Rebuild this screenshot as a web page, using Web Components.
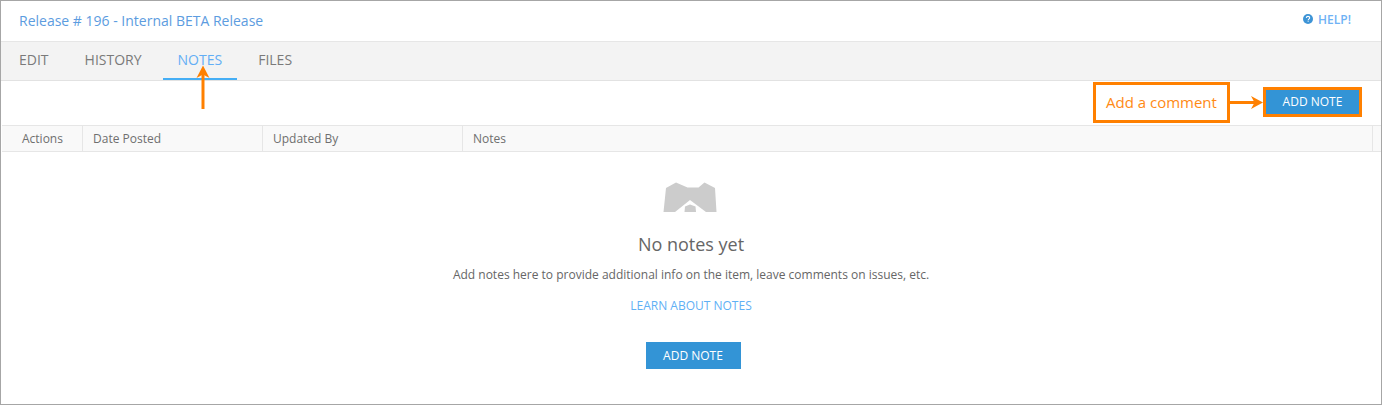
<!DOCTYPE html>
<html>
<head>
<meta charset="utf-8">
<title>Release notes</title>
<style>
  html, body { margin: 0; padding: 0; background: #fff; }
  body { font-family: "Open Sans", sans-serif; }
</style>
</head>
<body>
<release-panel>
  <span slot="title">Release # 196 - Internal BETA Release</span>
  <tab-bar slot="tabs" active="NOTES" tabs="EDIT,HISTORY,NOTES,FILES"></tab-bar>
  <notes-grid slot="grid" columns="Actions:81,Date Posted:180,Updated By:200,Notes:910"></notes-grid>
  <empty-state slot="body"></empty-state>
</release-panel>

<script>
const panelTemplate = document.createElement('template');
panelTemplate.innerHTML = /* html */`
  <style>
  :host {
    display: block;
    position: relative;
    box-sizing: border-box;
    width: 1382px;
    height: 405px;
    border: 1px solid #a6a6a6;
    overflow: hidden;
  }
  .head {
    display: flex;
    justify-content: space-between;
    align-items: center;
    height: 41px;
    box-sizing: border-box;
    padding: 0 30px 2px 18px;
    border-bottom: 1px solid #e6e6e6;
    color: #5c9ce0;
    font-size: 14px;
  }
  .help {
    display: flex;
    align-items: center;
    gap: 5px;
    margin-top: -2px;
    font-size: 12px;
    font-weight: 600;
    color: #6fb2f5;
  }
  .toolbar {
    display: flex;
    justify-content: flex-end;
    align-items: flex-start;
    height: 44px;
    box-sizing: border-box;
    padding: 7px 21px 0 0;
  }
  .box {
    position: absolute;
    left: 1092px;
    top: 81px;
    width: 137px;
    height: 41px;
    box-sizing: border-box;
    border: 3px solid #ff8000;
    color: #ff8a14;
    font-size: 15px;
    line-height: 35px;
    padding-left: 10px;
  }
  .ring {
    position: absolute;
    left: 1262px;
    top: 86px;
    width: 99px;
    height: 30px;
    box-sizing: border-box;
    border: 3px solid #ff8000;
  }
  svg.arrow { position: absolute; left: 0; top: 0; pointer-events: none; }
  </style>
  <div class="head">
    <slot name="title"></slot>
    <div class="help">
      <svg width="10" height="10" viewBox="0 0 10 10">
        <circle cx="5" cy="5" r="5" fill="#3d94d6"/>
        <path d="M3.3 3.9C3.4 2.9 4.1 2.4 5 2.4c1 0 1.7.6 1.7 1.4 0 .7-.4 1-.9 1.3-.4.3-.5.5-.5.9" fill="none" stroke="#fff" stroke-width="1.1"/>
        <rect x="4.6" y="6.6" width="1.1" height="1.1" fill="#fff"/>
      </svg>
      <span>HELP!</span>
    </div>
  </div>
  <slot name="tabs"></slot>
  <div class="toolbar"><action-button>ADD NOTE</action-button></div>
  <slot name="grid"></slot>
  <slot name="body"></slot>
  <div class="box">Add a comment</div>
  <div class="ring"></div>
  <svg class="arrow" width="1380" height="403">
    <path d="M1228 101.500H1254" stroke="#ff8000" stroke-width="3" fill="none"/>
    <path d="M1262 101.500L1250 95L1253.500 101.500L1250 108Z" fill="#ff8000"/>
    <path d="M202 108V72" stroke="#ff8000" stroke-width="3" fill="none"/>
    <path d="M202 64.500L195.500 77L202 73.500L208.500 77Z" fill="#ff8000"/>
  </svg>
`;

class ReleasePanel extends HTMLElement {
  constructor() {
    super();
    this.attachShadow({ mode: 'open' });
    this.shadowRoot.appendChild(panelTemplate.content.cloneNode(true));
  }
}

class TabBar extends HTMLElement {
  constructor() {
    super();
    this.attachShadow({ mode: 'open' });
  }

  connectedCallback() {
    const active = this.getAttribute('active');
    const tabs = this.getAttribute('tabs').split(',');
    this.shadowRoot.innerHTML = /* html */`
      <style>
      :host {
        display: flex;
        gap: 6px;
        height: 39px;
        box-sizing: border-box;
        padding-left: 3px;
        background: #f3f3f3;
        border-bottom: 1px solid #e2e2e2;
        font-size: 14px;
        color: #7a7a7a;
      }
      .tab {
        box-sizing: border-box;
        height: 38px;
        padding: 0 15px;
        line-height: 35px;
        border-bottom: 2px solid transparent;
      }
      .tab.on { color: #62aef5; border-bottom-color: #45aef5; }
      </style>
      ${tabs.map(t => `<div class="tab${t === active ? ' on' : ''}">${t}</div>`).join('')}
    `;
  }
}

class NotesGrid extends HTMLElement {
  constructor() {
    super();
    this.attachShadow({ mode: 'open' });
  }

  connectedCallback() {
    const cols = this.getAttribute('columns').split(',').map(c => c.split(':'));
    this.shadowRoot.innerHTML = /* html */`
      <style>
      :host {
        display: flex;
        height: 27px;
        box-sizing: border-box;
        margin-left: 1px;
        background: #f9f9f9;
        border-top: 1px solid #e6e6e6;
        border-bottom: 1px solid #e6e6e6;
        font-size: 12px;
        color: #6f6f6f;
      }
      .cell {
        box-sizing: border-box;
        padding-left: 10px;
        line-height: 25px;
        border-right: 1px solid #e6e6e6;
      }
      .cell:first-of-type { padding-left: 20px; }
      </style>
      ${cols.map(([name, w]) => `<div class="cell" style="width:${w}px">${name}</div>`).join('')}
    `;
  }
}

const emptyTemplate = document.createElement('template');
emptyTemplate.innerHTML = /* html */`
  <style>
  :host {
    display: flex;
    flex-direction: column;
    align-items: center;
    padding-top: 30px;
    color: #6a6a6a;
  }
  svg { display: block; margin-right: 2px; }
  h2 {
    margin: 18px 0 0;
    font-size: 18px;
    font-weight: 400;
    line-height: 26px;
    color: #666;
  }
  p {
    margin: 10px 0 0;
    font-size: 12px;
    line-height: 16px;
    color: #666;
  }
  a {
    margin-top: 15px;
    font-size: 12px;
    line-height: 16px;
    color: #5fb0f5;
  }
  action-button { margin: 28px 0 0 4px; }
  </style>
  <svg width="54" height="31" viewBox="0 0 54 31">
    <path fill="#cccccc" d="M0.500 30L3 6L13 0.500L24.500 5.500L35.500 5.500L41.500 0.500L52 6L53.500 30H43L27 18L12 30Z"/>
    <path fill="#cccccc" d="M21.500 30L22 24.500L27 22.500L32.500 24.500L33 30Z"/>
  </svg>
  <h2>No notes yet</h2>
  <p>Add notes here to provide additional info on the item, leave comments on issues, etc.</p>
  <a>LEARN ABOUT NOTES</a>
  <action-button>ADD NOTE</action-button>
`;

class EmptyState extends HTMLElement {
  constructor() {
    super();
    this.attachShadow({ mode: 'open' });
    this.shadowRoot.appendChild(emptyTemplate.content.cloneNode(true));
  }
}

const buttonTemplate = document.createElement('template');
buttonTemplate.innerHTML = /* html */`
  <style>
  :host {
    display: block;
    width: 95px;
    height: 27px;
    background: #3394d6;
    color: #fff;
    font-size: 12px;
    line-height: 27px;
    text-align: center;
  }
  </style>
  <slot></slot>
`;

class ActionButton extends HTMLElement {
  constructor() {
    super();
    this.attachShadow({ mode: 'open' });
    this.shadowRoot.appendChild(buttonTemplate.content.cloneNode(true));
  }
}

customElements.define('release-panel', ReleasePanel);
customElements.define('tab-bar', TabBar);
customElements.define('notes-grid', NotesGrid);
customElements.define('empty-state', EmptyState);
customElements.define('action-button', ActionButton);
</script>
</body>
</html>
